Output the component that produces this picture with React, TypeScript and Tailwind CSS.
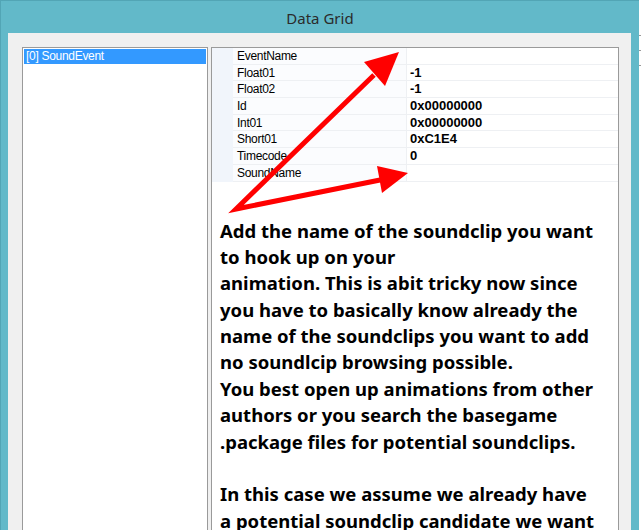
import React from "react";

const rows = [
  { name: "EventName", value: "" },
  { name: "Float01", value: "-1" },
  { name: "Float02", value: "-1" },
  { name: "Id", value: "0x00000000" },
  { name: "Int01", value: "0x00000000" },
  { name: "Short01", value: "0xC1E4" },
  { name: "Timecode", value: "0" },
  { name: "SoundName", value: "" },
];

const lines = [
  "Add the name of the soundclip you want",
  "to hook up on your",
  "animation. This is abit tricky now since",
  "you have to basically know already the",
  "name of the soundclips you want to add",
  "no soundlcip browsing possible.",
  "You best open up animations from other",
  "authors or you search the basegame",
  ".package files for potential soundclips.",
  "",
  "In this case we assume we already have",
  "a potential soundclip candidate we want",
];

const App = () => {
  return (
    <div className="relative w-[641px] h-[530px] overflow-hidden bg-white flex font-['Liberation_Sans',sans-serif]">
      <div className="w-[639px] h-full bg-[#62b9c9] border-l border-t border-[#52a5b5] flex flex-col">
        <div className="h-[32px] shrink-0 flex items-center justify-center text-[15px] text-[#2b2b2b] font-['Noto_Sans',sans-serif] pt-[3px]">
          Data Grid
        </div>
        <div className="ml-[7px] w-[623px] flex-1 min-h-0 bg-[#f0f0f0] pt-[14px] pl-[14px] flex gap-[3px]">
          {/* list */}
          <div className="w-[186px] h-[500px] shrink-0 border border-[#9a9a9a] bg-white p-[1px]">
            <div className="h-[15px] bg-[#3399ff] text-white text-[12px] leading-[15px] pl-[2px] tracking-[-0.3px]">
              [0] SoundEvent
            </div>
          </div>
          {/* property grid */}
          <div className="w-[408px] h-[500px] shrink-0 border border-[#9a9a9a] bg-white flex flex-col">
            <div className="flex flex-col">
              {rows.map((r) => (
                <div key={r.name} className="flex h-[16.7px] text-[12px] text-black">
                  <div className="w-[21px] bg-[#f1f5fb]" />
                  <div className="w-[173px] border-b border-[#eef0f3] bg-[#fbfcfe] pl-[4px] leading-[16px] tracking-[-0.3px]">
                    {r.name}
                  </div>
                  <div className="flex-1 border-b border-l border-[#eef0f3] pl-[3px] leading-[16px] font-bold text-[13px]">
                    {r.value}
                  </div>
                </div>
              ))}
            </div>
            <div className="pt-[36px] pl-[8px] font-['Noto_Sans',sans-serif] font-bold text-[18.5px] leading-[26.4px] text-black whitespace-pre">
              {lines.map((l, i) => (
                <div key={i} className="h-[26.4px]">
                  {l}
                </div>
              ))}
            </div>
          </div>
        </div>
      </div>
      <div className="w-[2px] h-full bg-white flex flex-col">
        <div className="mt-[35px] h-[1px] bg-[#9a9a9a]" />
        <div className="mt-[14px] h-[1px] bg-[#9a9a9a]" />
        <div className="mt-[14px] h-[1px] bg-[#9a9a9a]" />
      </div>
      {/* annotation arrows */}
      <svg className="absolute left-0 top-0 pointer-events-none" width="641" height="530">
        <polyline
          points="374,75 236,209 390,178"
          fill="none"
          stroke="#ff0000"
          strokeWidth="5"
          strokeLinejoin="miter"
        />
        <polygon points="364,62 399,52 385,86" fill="#ff0000" />
        <polygon points="377,166 408,173 382,193" fill="#ff0000" />
      </svg>
    </div>
  );
};

export default App;
